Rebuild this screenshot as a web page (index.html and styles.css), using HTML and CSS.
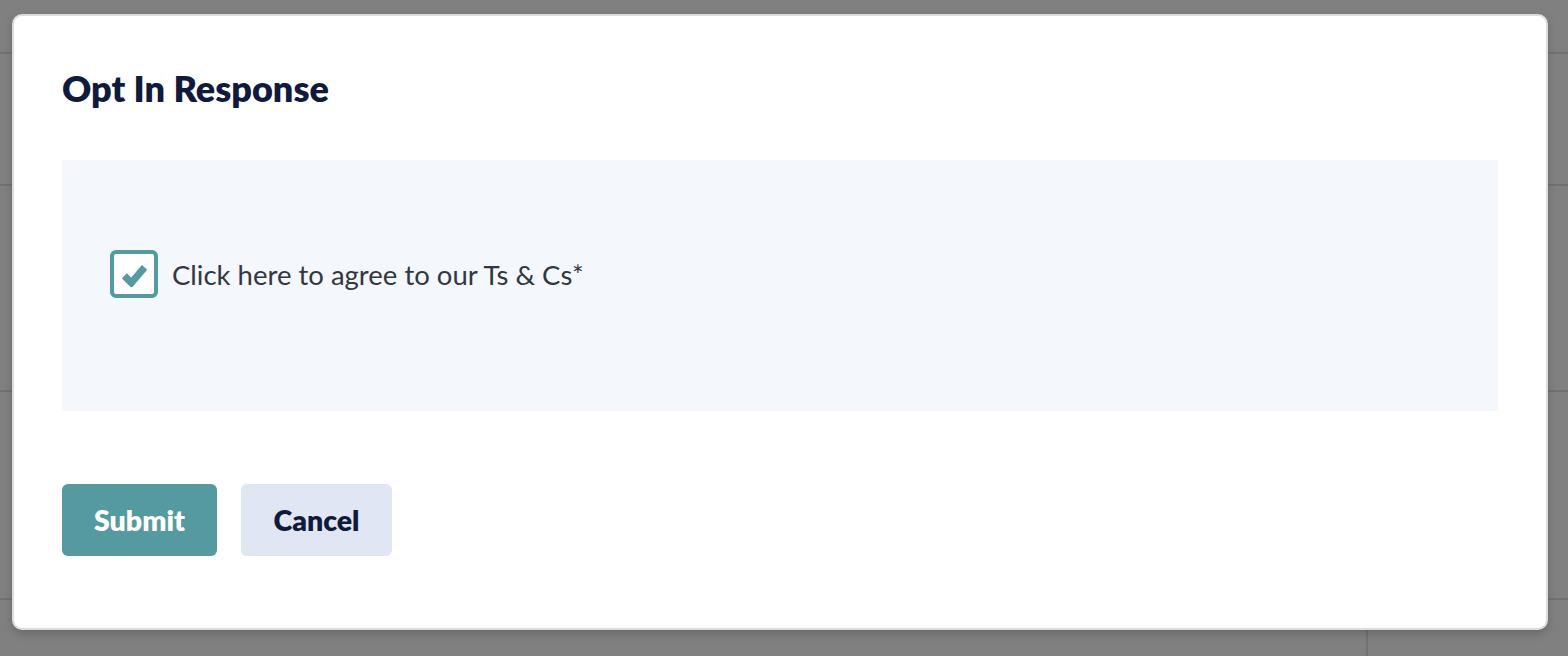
FILE: index.html
```html
<!DOCTYPE html>
<html lang="en">
<head>
<meta charset="utf-8">
<title>Opt In Response</title>
<link rel="stylesheet" href="styles.css">
</head>
<body>
<div class="page">
  <div class="page-row r1"></div>
  <div class="page-row r2"></div>
  <div class="page-row r3"></div>
  <div class="page-row r4"></div>
  <div class="page-row r5"><div class="main-col"></div><div class="side-col"></div></div>
</div>
<div class="overlay">
  <div class="modal" role="dialog" aria-labelledby="modal-title">
    <h1 class="modal-title" id="modal-title">Opt In Response</h1>
    <div class="panel">
      <label class="check-row">
        <span class="checkbox">
          <svg viewBox="0 0 24 24" width="25" height="25" aria-hidden="true"><polyline points="2.3,13.3 9,20 21.7,5.2" fill="none" stroke="#559aa0" stroke-width="6.8" stroke-linejoin="miter" stroke-linecap="butt"/></svg>
        </span>
        <span class="check-label">Click here to agree to our Ts &amp; Cs*</span>
      </label>
    </div>
    <div class="actions">
      <button class="btn btn-primary" type="button">Submit</button>
      <button class="btn btn-secondary" type="button">Cancel</button>
    </div>
  </div>
</div>
</body>
</html>
```
FILE: styles.css
```css
* { box-sizing: border-box; }
html, body { margin: 0; padding: 0; }
body {
  width: 1568px;
  height: 656px;
  overflow: hidden;
  background: #808080;
  font-family: Lato, "Open Sans", sans-serif;
  position: relative;
}
.page {
  display: flex;
  flex-direction: column;
  height: 656px;
}
.page-row { border-bottom: 2px solid #727272; flex: none; }
.r1 { height: 54px; }
.r2 { height: 132px; }
.r3 { height: 206px; }
.r4 { height: 208px; }
.r5 { border-bottom: 0; flex: 1; display: flex; }
.main-col { width: 1368px; border-right: 2px solid #727272; }
.side-col { flex: 1; }

.overlay {
  position: absolute;
  inset: 0;
  padding: 14px 20px 26px 12px;
}
.modal {
  width: 1536px;
  height: 616px;
  background: #fff;
  border: 2px solid #dcdcdc;
  border-radius: 10px;
  box-shadow: 0 4px 10px rgba(0,0,0,0.18);
  padding: 50px 48px 0 48px;
}
.modal-title {
  margin: 0;
  font-size: 36px;
  line-height: 44px;
  font-weight: 800;
  color: #0f1a3c;
}
.panel {
  margin-top: 50px;
  height: 251px;
  background: #f4f7fc;
  display: flex;
  align-items: flex-start;
  padding: 90px 48px 0 48px;
}
.check-row {
  display: flex;
  align-items: center;
  gap: 14px;
}
.checkbox {
  width: 48px;
  height: 48px;
  border: 4px solid #559aa0;
  border-radius: 6px;
  background: #fff;
  display: flex;
  align-items: center;
  justify-content: center;
}
.check-label {
  font-size: 27.5px;
  color: #333740;
}
.actions {
  margin-top: 73px;
  display: flex;
  gap: 24px;
}
.btn {
  height: 72px;
  border: 0;
  border-radius: 6px;
  font-family: Lato, "Open Sans", sans-serif;
  font-size: 28.5px;
  font-weight: 800;
  padding: 0;
}
.btn-primary { background: #559aa0; color: #fff; width: 155px; }
.btn-secondary { background: #e1e6f4; color: #0f1a3c; width: 151px; }
```
